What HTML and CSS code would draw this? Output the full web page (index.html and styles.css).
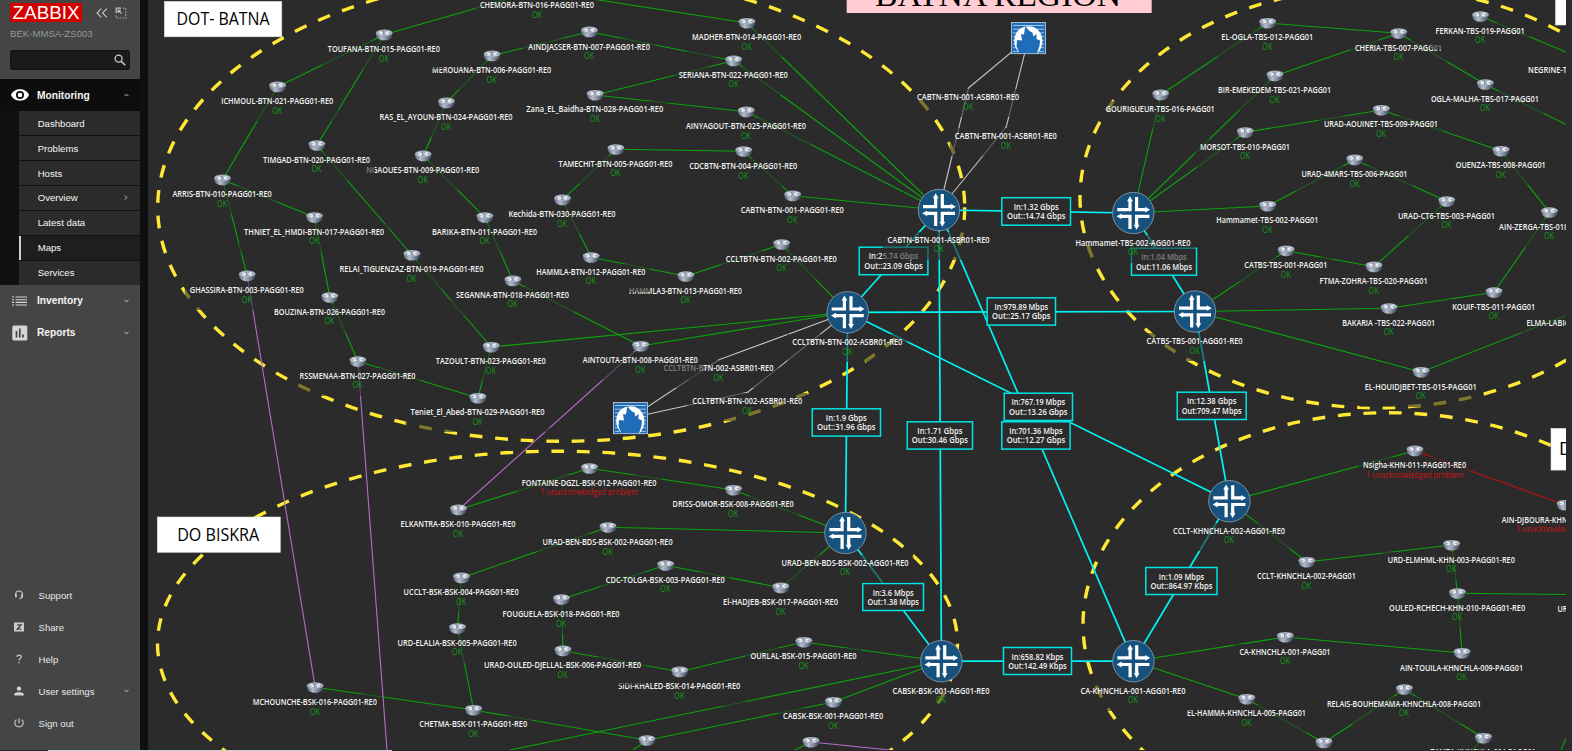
FILE: index.html
```
<!DOCTYPE html>
<html lang="en">
<head>
<meta charset="utf-8">
<title>Zabbix - Maps</title>
<link rel="stylesheet" href="styles.css">
</head>
<body>
<div class="layout">
  <aside class="sidebar">
    <header class="side-head">
      <div class="brand-row">
        <svg class="logo" width="72" height="19" viewBox="0 0 72 19"><rect width="72" height="19" fill="#d40000"/><text class="logo-text" x="2.6" y="16" textLength="67" lengthAdjust="spacingAndGlyphs">ZABBIX</text></svg>
        <svg class="ico-collapse" width="12" height="10" viewBox="0 0 12 10"><path d="M5.4.6 1 5l4.400 4.400M10.900.6 6.500 5l4.400 4.400" fill="none" stroke="#c4c8ca" stroke-width="1.100"/></svg>
        <svg class="ico-hide" width="12" height="12" viewBox="0 0 12 12"><path d="M1.200 6V1.200H6" fill="none" stroke="#c4c8ca" stroke-width="1.200"/><path d="M8 1.200h2.800v9.800H1.200V8" fill="none" stroke="#a8acae" stroke-width="1.100" stroke-dasharray="1.600 1.300"/><path d="M6.500 6.500 3.400 3.400M3.200 6V3.200H6" fill="none" stroke="#c4c8ca" stroke-width="1.100"/></svg>
      </div>
      <div class="server">BEK-MMSA-ZS003</div>
      <div class="search"><svg width="12" height="12" viewBox="0 0 12 12"><circle cx="4.600" cy="4.600" r="3.500" fill="none" stroke="#c8cccf" stroke-width="1.300"/><path d="m7.200 7.200 4 4" stroke="#c8cccf" stroke-width="1.600"/></svg></div>
    </header>
    <nav class="menu">
      <div class="top-item open">
        <svg class="top-ico" width="18" height="12" viewBox="0 0 18 12"><path d="M0 6C3-1.600 15-1.600 18 6 15 13.600 3 13.600 0 6z" fill="#fff"/><circle cx="9" cy="6" r="4" fill="#0d0d0d"/><circle cx="9" cy="6" r="2.300" fill="#fff"/></svg>
        <span>Monitoring</span><svg class="chev" width="5" height="4" viewBox="0 0 5 4"><path d="M.5 3.200 2.500 1.200l2 2" /></svg>
      </div>
      <div class="submenu">
        <a>Dashboard</a><a>Problems</a><a>Hosts</a>
        <a>Overview<svg class="chev" width="4" height="5" viewBox="0 0 4 5"><path d="M.8.500 2.800 2.500l-2 2"/></svg></a>
        <a>Latest data</a><a class="current">Maps</a><a>Services</a>
      </div>
      <div class="top-item">
        <svg class="top-ico" width="16" height="10" viewBox="0 0 16 10"><path d="M0 1h2M3.500 1H15M0 3.700h2M3.500 3.700H15M0 6.400h2M3.500 6.400H15M0 9h2M3.500 9H15" stroke="#d4d6d8" stroke-width="1.100"/></svg>
        <span>Inventory</span><svg class="chev" width="5" height="4" viewBox="0 0 5 4"><path d="m.5.800 2 2 2-2"/></svg>
      </div>
      <div class="top-item">
        <svg class="top-ico" width="16" height="16" viewBox="0 0 16 16"><rect x=".3" y=".5" width="15" height="15" rx="1.500" fill="#d4d6d8"/><path d="M4.500 6v6.500M7.800 3.600v8.900M11 9.500v3" stroke="#454545" stroke-width="1.700"/></svg>
        <span>Reports</span><svg class="chev" width="5" height="4" viewBox="0 0 5 4"><path d="m.5.800 2 2 2-2"/></svg>
      </div>
    </nav>
    <nav class="user-menu">
      <a><svg width="10" height="10" viewBox="0 0 10 10"><path d="M1.700 5.500V4.300a3.300 3.300 0 0 1 6.600 0v1.500c0 1.800-.8 2.700-2.800 2.800" fill="none" stroke="#c8ccce" stroke-width="1.100"/><path d="M1 4.300h1.800v3H1zM7.200 4.300H9v3H7.200z" fill="#c8ccce"/></svg><span>Support</span></a>
      <a><svg width="10" height="10" viewBox="0 0 10 10"><rect y=".5" width="10" height="9" fill="#c8ccce"/><path d="M3 2.900h4L3.200 7.200H7.200" fill="none" stroke="#454545" stroke-width="1.300"/></svg><span>Share</span></a>
      <a><svg width="10" height="10" viewBox="0 0 10 10"><path d="M3 3c0-2.600 4.200-2.600 4.200 0C7.200 4.600 5 4.600 5 6.600M5 8v1.300" fill="none" stroke="#c8ccce" stroke-width="1.200"/></svg><span>Help</span></a>
      <a><svg width="10" height="10" viewBox="0 0 10 10"><circle cx="5" cy="2.600" r="2.200" fill="#d0d4d6"/><path d="M.3 9.500V8c0-2.400 9.400-2.400 9.400 0v1.500z" fill="#d0d4d6"/></svg><span>User settings</span><svg class="chev" width="5" height="4" viewBox="0 0 5 4"><path d="m.5.800 2 2 2-2"/></svg></a>
      <a><svg width="10" height="10" viewBox="0 0 10 10"><path d="M5 .4v4.800M2.300 1.600a4.200 4.200 0 1 0 5.400 0" fill="none" stroke="#c8ccce" stroke-width="1.100"/></svg><span>Sign out</span></a>
    </nav>
  </aside>
  <main class="map-area">
    <svg id="map" class="map" width="1424" height="750" viewBox="148 0 1424 750">
      <defs>
        <clipPath id="mapclip"><rect x="148" y="0" width="1418" height="750"/></clipPath>
        <linearGradient id="metal" x1="0" x2="1" y1="0" y2="0"><stop offset="0" stop-color="#566278"/><stop offset=".35" stop-color="#b4bece"/><stop offset=".6" stop-color="#8590a4"/><stop offset="1" stop-color="#39414f"/></linearGradient>
        <g id="router">
          <path d="M-8.300-1.800V-.5C-8 3-5.500 5.500 0 5.500S8 3 8.300-.5V-1.800z" fill="url(#metal)"/>
          <ellipse cy="-1.800" rx="8.300" ry="3.300" fill="#a3adbc"/>
          <path d="M-5.200-2.900-1.500-1.900M5-3.100 1.600-2.100M-4.600-.3-1-1.200M4.600-.3 1.500-1.300" stroke="#f3f6fa" stroke-width="1.200"/>
          <path d="M-.8-3.800v3.600" stroke="#6b768a" stroke-width=".7"/>
        </g>
        <g id="core">
          <circle r="20.700" fill="#17517d" stroke="#8597a8" stroke-width=".9"/>
          <g id="half"><path d="M-16-3.300H-3.300V-12.500" fill="none" stroke="#fff" stroke-width="3.200"/><path d="M-3.300-16.800-6.200-11.800H-.4z" fill="#fff"/>
          <g transform="rotate(90)"><path d="M-16-3.300H-3.300V-12.500" fill="none" stroke="#fff" stroke-width="3.200"/><path d="M-3.300-16.800-6.200-11.800H-.4z" fill="#fff"/></g></g>
          <use href="#half" transform="rotate(180)"/>
        </g>
        <g id="cloud">
          <rect x="-17" y="-15.600" width="34" height="31.300" fill="#1f6cb8" stroke="#c9d5e0" stroke-width=".8"/>
          <path d="M-15.500-12.500h31M-15.500-8.800h31M-15.500-5.100h31M-15.500-1.400h31M-15.500 2.300h31M-15.500 6h31M-15.500 9.700h31M-15.500 13.400h31" stroke="#b4d0ea" stroke-width=".9"/>
          <path d="M-8 15.300C-17 9-15.500-5-8-9.500-2-13 5-12.500 9-8.500 16-2 15 9 9 15.300z" fill="#fff"/>
          <path d="M-9 15.300-12 8.500-11.500 2-6.500 2.500-7.500-4-4.500-3.500-3.300-11.500 1.500-6.500 4-5.500 4.800-1.500 8-4 8 1 11.500 2.500 11 8 8.500 15.300z" fill="#1f6cb8"/>
        </g>
      </defs>
    </svg>
  </main>
</div>
<div class="statusline"><i></i></div>
<script src="map.js"></script>
</body>
</html>
```
FILE: styles.css
```
html, body { margin: 0; height: 100%; overflow: hidden; background: #2b2b2b; }
body { font-family: "Liberation Sans", Arial, sans-serif; font-size: 9.6px; color: #f6f6f6; }
.layout { display: flex; height: 750px; background: #0e1012; gap: 8px; }
.sidebar { width: 140px; flex: none; background: #454545; display: flex; flex-direction: column; }
.side-head { height: 79px; padding: 3px 10px 0; box-sizing: border-box; }
.brand-row { display: flex; align-items: flex-start; }
.logo { display: block; overflow: visible; }
.logo-text { font: 18.5px "Liberation Sans", Arial, sans-serif; fill: #fff; }
.ico-collapse { margin: 4.5px 0 0 14px; }
.ico-hide { margin: 3.5px 0 0 7px; }
.server { margin-top: 5px; height: 13px; line-height: 13px; color: #8f9a9f; }
.search { margin-top: 10px; height: 18px; border: 1px solid #0c1519; border-radius: 2px; background: #1a1a1a; display: flex; align-items: center; justify-content: flex-end; padding-right: 3px; }
.menu { flex: 1; }
.top-item { height: 32px; display: flex; align-items: center; font-weight: bold; font-size: 10.2px; padding-right: 11px; }
.top-item span { flex: 1; }
.top-ico { width: 18px; margin: 0 8.5px 0 10.5px; flex: none; }
.open { background: #0d0d0d; }
.chev path { fill: none; stroke: #c9cdd0; stroke-width: 1; }
.submenu { background: #0f1011; padding-left: 19px; height: 173.5px; display: grid; grid-template-rows: repeat(7, 1fr); row-gap: 1px; }
.submenu a { background: #2b2b2b; display: flex; align-items: center; justify-content: space-between; padding: 1px 12px 0 18.7px; }
.submenu a:nth-child(n+4) { padding-top: 0; }
.submenu .current { background: #1e1e1e; box-shadow: inset 2px 0 #d0d0d0; }
.user-menu { padding-bottom: 11px; }
.user-menu a { display: flex; align-items: center; height: 32px; padding: 0 11px 0 14px; color: #e4e8ea; }
.user-menu span { flex: 1; margin-left: 14.5px; padding-top: 1px; }
.map-area { flex: 1; min-width: 0; background: #2b2b2b; }
.map { display: block; }
.statusline { height: 1px; background: #22262a; padding-left: 48px; }
.statusline i { display: block; width: 344px; height: 1px; background: #cfcfcf; }
.label { font: 600 9px "Open Sans", "Noto Sans", sans-serif; fill: #f4f4f4; }
.status { font: 500 9px "Open Sans", "Noto Sans", sans-serif; fill: #149a18; }
.problem { fill: #cc1414; }
.dim { fill: #2b2b2b; fill-opacity: .6; }
.traffic { fill: #2b2b2b; stroke: #00e4e4; stroke-width: 1.5; }
.title { font: 18.2px "Open Sans", "Noto Sans", sans-serif; fill: #000; }
.region { font: 31px "Liberation Serif", serif; fill: #000; }
.zone { fill: none; stroke: #ffe836; stroke-width: 3.4; stroke-dasharray: 12.8 12.78; }
.green { stroke: #0aa50a; stroke-width: 1.1; }
.purple { stroke: #b86ac8; stroke-width: 1.1; }
.grey { stroke: #c4c4c4; stroke-width: 1.1; }
.red { stroke: #b41212; stroke-width: 1.1; }
.cyan { stroke: #00f4f4; stroke-width: 1.7; }
```
FILE: map.js
```
const NS = 'http://www.w3.org/2000/svg';
const svg = document.getElementById('map');
const root = document.createElementNS(NS, 'g');
root.setAttribute('clip-path', 'url(#mapclip)');
svg.appendChild(root);

function add(tag, attrs, text) {
  const el = document.createElementNS(NS, tag);
  for (const k in attrs) el.setAttribute(k, attrs[k]);
  if (text !== undefined) el.textContent = text;
  root.appendChild(el);
  return el;
}
function label(cls, text, x, y, width) {
  add('text', { class: cls, x: x - width / 2, y, textLength: width, lengthAdjust: 'spacingAndGlyphs' }, text);
}

// key: [name, icon x, icon y, name y, status y, label width, icon type]
const P = '-PAGG01-RE0';
const nodes = {
  chemora: ['CHEMORA-BTN-016' + P, 537.3, -9.5, 5, 15, 114],
  aindjasser: ['AINDJASSER-BTN-007' + P, 589.5, 31.7, 46.3, 56, 121.7],
  merouana: ['MEROUANA-BTN-006' + P, 492, 55.7, 70, 80, 119],
  toufana: ['TOUFANA-BTN-015' + P, 384.2, 34.7, 49, 59, 112],
  ichmoul: ['ICHMOUL-BTN-021' + P, 277.6, 86.7, 101, 111, 112],
  ras: ['RAS_EL_AYOUN-BTN-024' + P, 446.5, 102.7, 117, 127, 133],
  zana: ['Zana_EL_Baidha-BTN-028' + P, 595.2, 95, 109, 119, 137],
  ngaoues: ['NGAOUES-BTN-009' + P, 423.2, 155.7, 170, 180, 113],
  timgad: ['TIMGAD-BTN-020' + P, 316.9, 145.3, 160, 169, 107],
  tamechit: ['TAMECHIT-BTN-005' + P, 615.9, 149.3, 164, 173, 114],
  arris: ['ARRIS-BTN-010' + P, 222.5, 179.7, 194, 204, 99.3],
  thniet: ['THNIET_EL_HMDI-BTN-017' + P, 314.5, 217.3, 232, 241, 140],
  kechida: ['Kechida-BTN-030' + P, 562.5, 199.7, 214, 224, 107],
  barika: ['BARIKA-BTN-011' + P, 484.9, 217.3, 232, 241, 105],
  relai: ['RELAI_TIGUENZAZ-BTN-019' + P, 411.9, 255, 269, 279, 144],
  ghassira: ['GHASSIRA-BTN-003' + P, 247.2, 275.7, 290, 300, 114],
  bouzina: ['BOUZINA-BTN-026' + P, 329.9, 297.3, 312, 321, 111],
  seganna: ['SEGANNA-BTN-018' + P, 512.9, 280.7, 295, 304, 113],
  hammla3: ['HAMMLA3-BTN-013' + P, 685.9, 276.3, 291, 300, 113],
  hammla: ['HAMMLA-BTN-012' + P, 591.2, 257.3, 272, 281, 109],
  tazoult: ['TAZOULT-BTN-023' + P, 491.2, 347, 361, 371, 110],
  rssmenaa: ['RSSMENAA-BTN-027' + P, 357.9, 361.3, 376, 385, 116],
  teniet: ['Teniet_El_Abed-BTN-029' + P, 477.9, 398, 412, 422, 134],
  madher: ['MADHER-BTN-014' + P, 747, 23, 37, 47, 109],
  seriana: ['SERIANA-BTN-022' + P, 733.7, 60.7, 75, 84, 109],
  ainyagout: ['AINYAGOUT-BTN-025' + P, 746.3, 111.7, 126, 136, 120],
  cdcbtn: ['CDCBTN-BTN-004' + P, 743.7, 151.3, 166, 176, 108],
  cabtn1: ['CABTN-BTN-001' + P, 792.7, 195.7, 210, 220, 103],
  ccltbtn2: ['CCLTBTN-BTN-002' + P, 781.7, 244.3, 259, 268, 111],
  asbrC: ['CCLTBTN-BTN-002-ASBR01-RE0', 718.9, 359.7, 368, 378, 110, 'dot'],
  asbrD: ['CCLTBTN-BTN-002-ASBR01-RE0', 747.7, 392.3, 401, 411, 110, 'dot'],
  aintouta: ['AINTOUTA-BTN-008' + P, 640.7, 346, 360, 370, 115],
  asbrA: ['CABTN-BTN-001-ASBR01-RE0', 968.5, 88, 97, 107, 102, 'dot'],
  asbrB: ['CABTN-BTN-001-ASBR01-RE0', 1006.2, 127, 136, 146, 102, 'dot'],
  CABTN: ['CABTN-BTN-001-ASBR01-RE0', 939, 210, 240, 249, 102, 'core'],
  CCLTBTN: ['CCLTBTN-BTN-002-ASBR01-RE0', 847.7, 312.3, 342, 352, 110, 'core'],
  elogla: ['EL-OGLA-TBS-012-PAGG01', 1267.7, 23, 37, 47, 92],
  cheria: ['CHERIA-TBS-007-PAGG01', 1398.8, 33.3, 48, 57, 87],
  ferkan: ['FERKAN-TBS-019-PAGG01', 1480.5, 16.3, 31, 40, 89],
  bir: ['BIR-EMEKEDEM-TBS-021-PAGG01', 1275, 75.7, 90, 100, 113],
  gouri: ['GOURIGUEUR-TBS-016-PAGG01', 1160.7, 94.7, 109, 119, 109],
  negrine: ['NEGRINE-TBS-018-PAGG01', 1575.5, 56, 70, 80, 94],
  ogla: ['OGLA-MALHA-TBS-017-PAGG01', 1485.3, 84.3, 99, 108, 108],
  aouinet: ['URAD-AOUINET-TBS-009-PAGG01', 1381.3, 110, 124, 134, 114],
  morsot: ['MORSOT-TBS-010-PAGG01', 1245.3, 132.3, 147, 156, 90],
  ouenza: ['OUENZA-TBS-008-PAGG01', 1501.1, 151, 165, 175, 90],
  mars: ['URAD-4MARS-TBS-006-PAGG01', 1354.8, 159.7, 174, 184, 106],
  ham2: ['Hammamet-TBS-002-PAGG01', 1267.7, 206, 220, 230, 102],
  ct6: ['URAD-CT6-TBS-003-PAGG01', 1446.8, 201.3, 216, 225, 97],
  zerga: ['AIN-ZERGA-TBS-018-PAGG01', 1549.5, 212.3, 227, 236, 100],
  catbs1: ['CATBS-TBS-001-PAGG01', 1286.2, 250.7, 265, 275, 83],
  ftma: ['FTMA-ZOHRA-TBS-020-PAGG01', 1374, 266.7, 281, 291, 108],
  kouif: ['KOUIF-TBS-011-PAGG01', 1494.1, 292.3, 307, 316, 83],
  bakaria: ['BAKARIA -TBS-022-PAGG01', 1389.1, 308.3, 323, 332, 93],
  elma: ['ELMA-LABIOD-TBS-014-PAGG01', 1582.3, 309, 323, 333, 111],
  houidj: ['EL-HOUIDJBET-TBS-015-PAGG01', 1421.1, 372, 387, 396, 112],
  HAM: ['Hammamet-TBS-002-AGG01-RE0', 1133.3, 213, 243, 252, 115, 'core'],
  CATBS: ['CATBS-TBS-001-AGG01-RE0', 1195, 311.5, 341, 351, 96, 'core'],
  fontaine: ['FONTAINE-DGZL-BSK-012' + P, 589.5, 468.3, 483, 492, 134.5, 'problem'],
  elkantra: ['ELKANTRA-BSK-010' + P, 458.5, 509.7, 524, 534, 115],
  uradben: ['URAD-BEN-BDS-BSK-002' + P, 608, 527.3, 542, 552, 130],
  ucclt: ['UCCLT-BSK-BSK-004' + P, 461.5, 577.7, 592, 602, 115],
  foug: ['FOUGUELA-BSK-018' + P, 561.5, 599.3, 614, 624, 117],
  urd: ['URD-ELALIA-BSK-005' + P, 457.5, 628.3, 643, 652, 119],
  sidi: ['SIDI-KHALED-BSK-014' + P, 679.7, 671.7, 686, 696, 122],
  ouled: ['URAD-OULED-DJELLAL-BSK-006' + P, 563, 650.7, 665, 675, 157],
  mchou: ['MCHOUNCHE-BSK-016' + P, 315.2, 687.3, 702, 712, 124],
  chetma: ['CHETMA-BSK-011' + P, 473.6, 710, 724, 734, 108],
  driss: ['DRISS-OMOR-BSK-008' + P, 733.5, 490, 504, 514, 121],
  tolga: ['CDC-TOLGA-BSK-003' + P, 665.7, 565.3, 580, 589, 119],
  hadjeb: ['El-HADJEB-BSK-017' + P, 780.9, 587.7, 602, 612, 115],
  ourlal: ['OURLAL-BSK-015' + P, 803.9, 642, 656, 666, 106],
  cabsk1: ['CABSK-BSK-001' + P, 833.5, 702, 716, 726, 100],
  s1: ['DOUCEN-BSK-007' + P, 647, 740.3, 762, 772, 100],
  s2: ['TOLGA-BSK-009' + P, 811, 742, 762, 772, 100],
  UBEN: ['URAD-BEN-BDS-BSK-002-AGG01-RE0', 845.4, 533, 563, 572, 127, 'core'],
  CABSK: ['CABSK-BSK-001-AGG01-RE0', 941.4, 661.2, 691, 700, 97, 'core'],
  nsigha: ['Nsigha-KHN-011' + P, 1415, 450.7, 465, 475, 103, 'problem'],
  djboura: ['AIN-DJBOURA-KHN-012' + P, 1565.2, 505, 520, 529, 126, 'problem'],
  cclt2: ['CCLT-KHNCHLA-002-PAGG01', 1306.8, 562, 576, 586, 99],
  elmh: ['URD-ELMHML-KHN-003' + P, 1451.7, 545, 560, 569, 127],
  rchech: ['OULED-RCHECH-KHN-010' + P, 1457.5, 593.3, 608, 617, 136],
  ur: ['URD-BABAR-KHN-006' + P, 1616.5, 595, 609, 618, 117],
  touila: ['AIN-TOUILA-KHNCHLA-009-PAGG01', 1462, 653, 668, 677, 123],
  ca1: ['CA-KHNCHLA-001-PAGG01', 1285.3, 637, 652, 661, 91],
  hamma: ['EL-HAMMA-KHNCHLA-005-PAGG01', 1246.8, 699, 713, 723, 119],
  relais: ['RELAIS-BOUHEMAMA-KHNCHLA-008-PAGG01', 1404.4, 689.3, 704, 713, 154],
  s3: ['KAIS-KHNCHLA-006-PAGG01', 1324, 742.7, 764, 774, 90],
  s4: ['TAMZA-KHNCHLA-004-PAGG01', 1483.5, 738, 751.6, 762, 105],
  CCLTK: ['CCLT-KHNCHLA-002-AGG01-RE0', 1229.4, 501.2, 531, 540, 112, 'core'],
  CAK: ['CA-KHNCHLA-001-AGG01-RE0', 1133.4, 661.2, 691, 700, 105, 'core']
};
const free = { cloud1: [1028.5, 38], cloud2: [630.5, 418], malhaE: [1566, 124.5], ferkanE: [1566, 52], rssE: [387, 750], s2E: [890, 750],
  bskE: [510, 750], s1E: [633, 750], s2W: [795, 750], s4W: [1472, 750], cA: [1566, 738], cB: [1561, 750] };
const at = k => free[k] || [nodes[k][1], nodes[k][2]];

// dashed borders of the four operational areas
[[561.2, 207.3, 403.5, 234], [557.5, 643.7, 400, 192.5], [1377.5, 197.6, 297.5, 210.3], [1388, 624.4, 305, 211.7]]
  .forEach(([cx, cy, rx, ry]) => add('ellipse', { class: 'zone', cx, cy, rx, ry }));

const links = {
  green: 'chemora-toufana chemora-madher toufana-ichmoul toufana-timgad ichmoul-arris arris-thniet arris-ghassira thniet-bouzina bouzina-rssmenaa rssmenaa-teniet teniet-tazoult timgad-relai relai-tazoult tazoult-CCLTBTN aindjasser-merouana aindjasser-seriana merouana-ras ras-ngaoues ngaoues-barika barika-seganna seganna-aintouta aintouta-CCLTBTN zana-seriana zana-ainyagout madher-CABTN seriana-CABTN ainyagout-CABTN tamechit-cdcbtn cdcbtn-cabtn1 cabtn1-CABTN tamechit-kechida kechida-hammla hammla-hammla3 hammla3-ccltbtn2 ccltbtn2-CCLTBTN elogla-cheria elogla-gouri gouri-HAM cheria-bir bir-HAM cheria-ogla ogla-malhaE ferkan-ferkanE morsot-aouinet morsot-HAM aouinet-ouenza ouenza-zerga zerga-kouif kouif-bakaria bakaria-CATBS ham2-HAM ham2-mars mars-ct6 ct6-ftma ftma-catbs1 catbs1-CATBS houidj-CATBS houidj-elma fontaine-elkantra fontaine-driss driss-UBEN uradben-UBEN uradben-ucclt ucclt-urd urd-chetma tolga-foug tolga-hadjeb hadjeb-UBEN foug-ouled ouled-sidi sidi-ourlal ourlal-CABSK mchou-chetma chetma-s1 s1-cabsk1 cabsk1-CABSK bskE-CABSK s1E-s1 s2W-s2 CCLTK-nsigha CCLTK-cclt2 cclt2-elmh elmh-rchech rchech-ur rchech-touila ca1-touila CAK-ca1 CAK-hamma hamma-s3 s3-relais relais-s4 s4-s4W cA-cB',
  purple: 'ghassira-mchou rssmenaa-rssE aintouta-elkantra s2-s2E',
  grey: 'cloud1-asbrA asbrA-CABTN cloud1-asbrB asbrB-CABTN cloud2-asbrC asbrC-CCLTBTN cloud2-asbrD asbrD-CCLTBTN',
  red: 'nsigha-djboura',
  cyan: 'CABTN-HAM CABTN-CCLTBTN CABTN-CABSK CABTN-CAK CCLTBTN-CATBS CCLTBTN-UBEN CCLTBTN-CCLTK HAM-CATBS CATBS-CCLTK UBEN-CABSK CABSK-CAK CCLTK-CAK'
};
for (const cls in links) {
  for (const pair of links[cls].split(' ')) {
    const [a, b] = pair.split('-').map(at);
    add('line', { class: cls, x1: a[0], y1: a[1], x2: b[0], y2: b[1] });
  }
}

// traffic boxes: x, y, w, h, in, out, text widths
[
  [1001.8, 197.7, 68.7, 27.5, 'In:1.32 Gbps', 'Out::14.74 Gbps', 45, 58.5],
  [859.2, 247.2, 68.7, 27.5, 'In:25.74 Gbps', 'Out::23.09 Gbps', 49.5, 58.5],
  [987.2, 297.8, 68.3, 27.3, 'In:979.89 Mbps', 'Out::25.17 Gbps', 53.5, 58.5],
  [1131.5, 248.2, 65, 27, 'In:1.04 Mbps', 'Out:11.06 Mbps', 45.5, 56],
  [812.2, 408.8, 68.3, 27.3, 'In:1.9 Gbps', 'Out::31.96 Gbps', 41, 58.5],
  [907.2, 421.8, 65.3, 27.3, 'In:1.71 Gbps', 'Out:30.46 Gbps', 45, 56],
  [1004.2, 393.2, 68.3, 27.3, 'In:767.19 Mbps', 'Out::13.26 Gbps', 53.5, 58.5],
  [1001.8, 421.8, 68.3, 27.3, 'In:701.36 Mbps', 'Out::12.27 Gbps', 53.5, 58.5],
  [862.8, 583.5, 60.7, 27, 'In:3.6 Mbps', 'Out:1.38 Mbps', 41, 51.5],
  [1003.5, 647.5, 68, 27, 'In:658.82 Kbps', 'Out:142.49 Kbps', 52, 58.5],
  [1177.2, 392.2, 69, 27.3, 'In:12.38 Gbps', 'Out:709.47 Mbps', 49.5, 60],
  [1145.8, 567.5, 71.2, 27, 'In:1.09 Mbps', 'Out::864.97 Kbps', 45.5, 62]
].forEach(([x, y, width, height, a, b, wa, wb]) => {
  add('rect', { class: 'traffic', x, y, width, height });
  label('label', a, x + width / 2, y + 12, wa);
  label('label', b, x + width / 2, y + 21.6, wb);
});

function titleBox(x, y, width, height, fill) { add('rect', { x, y, width, height, fill, stroke: '#d8d8d8', 'stroke-width': .6 }); }
titleBox(164.3, 1.3, 117.5, 35.5, '#fff');
label('title', 'DOT- BATNA', 223, 25.3, 93);
titleBox(157.3, 517, 123, 35.3, '#fff');
label('title', 'DO BISKRA', 218.2, 541, 82);
add('rect', { x: 846.7, y: 0, width: 305, height: 13, fill: '#ffcdd2' });
label('region', 'BATNA REGION', 998, 6, 246);
titleBox(1555.5, -5, 40, 30, '#fff');
titleBox(1551, 428.3, 60, 41.8, '#fff');
add('text', { class: 'title', x: 1559, y: 455 }, 'DO KHENCHELA');

// label plates shade lines and neighbouring labels
for (const k in nodes) {
  const [name, x, , ny, sy, w, kind] = nodes[k];
  const cx = x - .4;
  add('rect', { class: 'dim', x: cx - w / 2 - 5, y: ny - 8, width: w + 10, height: k === 'ferkan' ? 26.5 : 28 });
  label('label', name, cx, ny + 3.2, w);
  if (kind === 'problem') label('status problem', '1 unacknowledged problem', cx, sy + 3.2, 97.5);
  else label('status', 'OK', cx, sy + 3.2, 10);
}

// icons stay above every plate
for (const k in nodes) {
  const [, x, y, , , , kind] = nodes[k];
  if (kind === 'dot') add('circle', { cx: x, cy: y, r: .9, fill: '#7f9fb5' });
  else add('use', { href: kind === 'core' ? '#core' : '#router', x, y });
}
['cloud1', 'cloud2'].forEach(k => add('use', { href: '#cloud', x: free[k][0], y: free[k][1] }));
```
